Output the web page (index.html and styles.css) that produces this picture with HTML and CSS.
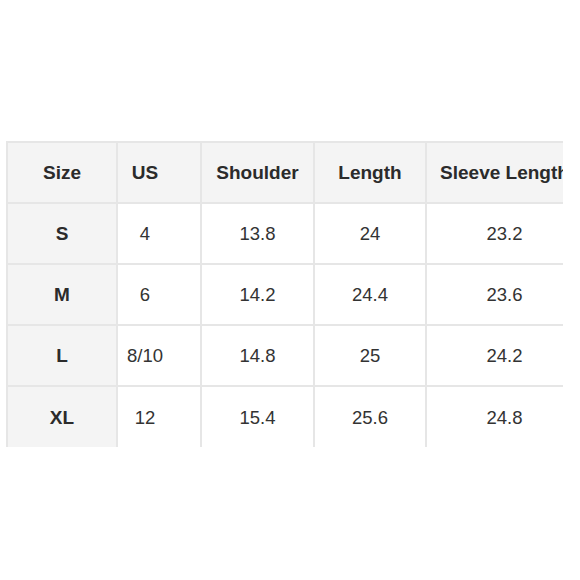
FILE: index.html
```html
<!DOCTYPE html>
<html>
<head>
<meta charset="utf-8">
<link rel="stylesheet" href="styles.css">
</head>
<body>
<div class="chart">
  <table class="sizes">
    <colgroup>
      <col class="c-size">
      <col class="c-us">
      <col class="c-shoulder">
      <col class="c-length">
      <col class="c-sleeve">
    </colgroup>
    <thead>
      <tr>
        <th>Size</th>
        <th class="us">US</th>
        <th>Shoulder</th>
        <th>Length</th>
        <th>Sleeve Length</th>
      </tr>
    </thead>
    <tbody>
      <tr><th>S</th><td class="us">4</td><td>13.8</td><td>24</td><td>23.2</td></tr>
      <tr><th>M</th><td class="us">6</td><td>14.2</td><td>24.4</td><td>23.6</td></tr>
      <tr><th>L</th><td class="us">8/10</td><td>14.8</td><td>25</td><td>24.2</td></tr>
      <tr><th>XL</th><td class="us">12</td><td>15.4</td><td>25.6</td><td>24.8</td></tr>
    </tbody>
  </table>
</div>
</body>
</html>
```
FILE: styles.css
```css
html, body {
  margin: 0;
  padding: 0;
  background: #ffffff;
}

body {
  font-family: "Liberation Sans", Arial, sans-serif;
  color: #333333;
}

.chart {
  margin: 141px 0 0 6px;
  width: 557px;
  height: 306px;
  overflow: hidden;
}

.sizes {
  table-layout: fixed;
  border-collapse: separate;
  border-spacing: 0;
  width: 578px;
  border-top: 2px solid #e6e6e6;
  border-left: 2px solid #e6e6e6;
}

.c-size { width: 110px; }
.c-us { width: 84px; }
.c-shoulder { width: 113px; }
.c-length { width: 112px; }
.c-sleeve { width: 157px; }

.sizes th,
.sizes td {
  box-sizing: border-box;
  height: 61px;
  padding: 0;
  text-align: center;
  vertical-align: middle;
  border-right: 2px solid #e6e6e6;
  border-bottom: 2px solid #e6e6e6;
  white-space: nowrap;
  font-size: 18.5px;
}

.sizes th {
  font-weight: bold;
  font-size: 19px;
  color: #2b2b2b;
  background: #f4f4f4;
}

.sizes td {
  font-weight: normal;
  background: #ffffff;
}

.sizes tbody tr:last-child th,
.sizes tbody tr:last-child td {
  border-bottom: none;
}

.sizes .us {
  padding-right: 28px;
}
```
